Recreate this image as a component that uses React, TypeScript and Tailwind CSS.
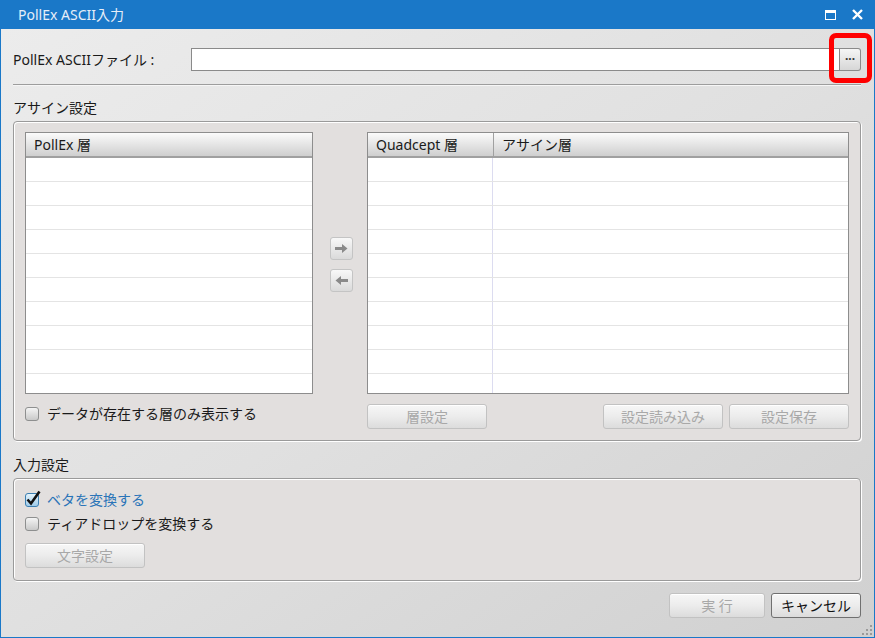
import React from "react";

const font = "font-['Noto_Sans','Noto_Sans_CJK_JP',sans-serif]";

function Checkbox({ checked, label }: { checked?: boolean; label: string }) {
  return (
    <div className="flex items-center h-[20px]">
      <div className="relative w-[14px] h-[14px] ml-[0px]">
        <div
          className={
            checked
              ? "w-[14px] h-[14px] rounded-[3px] border border-[#3c7fb1] bg-gradient-to-b from-[#e5f4fc] to-[#9fcbe9]"
              : "w-[14px] h-[14px] rounded-[3px] border border-[#8e8f8f] bg-gradient-to-b from-[#f4f4f4] to-[#c9c9c9]"
          }
        />
        {checked && (
          <svg className="absolute left-[1px] top-[-3px]" width="15" height="16" viewBox="0 0 15 16">
            <path d="M1.5 9.5 L5 13.5 L13.5 1.5" fill="none" stroke="#111" strokeWidth="2.6" strokeLinejoin="miter" />
          </svg>
        )}
      </div>
      <span className={"ml-[8px] text-[14px] leading-[20px] " + (checked ? "text-[#2a74b8]" : "text-[#1a1a1a]")}>{label}</span>
    </div>
  );
}

function Btn({ label, w, enabled, h = 25, className = "" }: { label: string; w: number; enabled?: boolean; h?: number; className?: string }) {
  return (
    <div
      style={{ width: w, height: h }}
      className={
        "flex items-center justify-center rounded-[3px] border text-[14px] leading-none bg-gradient-to-b from-[#f7f7f7] via-[#ececec] to-[#dcdcdc] shadow-[inset_0_1px_0_#ffffff] " +
        (enabled ? "border-[#707070] text-[#111] " : "border-[#c2c2c2] text-[#a8a8a8] ") +
        className
      }
    >
      {label}
    </div>
  );
}

function Row({ cols }: { cols?: boolean }) {
  return (
    <div className="flex h-[24px] border-b border-[#e4e4e4] bg-white shrink-0">
      {cols ? (
        <>
          <div className="w-[125px] h-full border-r border-[#dcdcf0]" />
          <div className="flex-1" />
        </>
      ) : null}
    </div>
  );
}

export default function App() {
  const rows = Array.from({ length: 10 });
  return (
    <div className={"w-[875px] h-[638px] bg-[#1a78c8] flex flex-col overflow-hidden text-[#1a1a1a] " + font}>
      {/* title bar */}
      <div className="h-[29px] flex items-center shrink-0 pl-[18px] pr-[12px]">
        <span className="text-[14px] text-[#e6eef8] leading-none">PollEx ASCII入力</span>
        <div className="ml-auto flex items-center gap-[16px]">
          <svg width="11" height="10" viewBox="0 0 11 10">
            <rect x="0.5" y="0.5" width="10" height="9" fill="none" stroke="#fff" strokeWidth="1" />
            <rect x="0" y="0" width="11" height="3" fill="#fff" />
          </svg>
          <svg width="11" height="11" viewBox="0 0 11 11">
            <path d="M1 1 L10 10 M10 1 L1 10" stroke="#fff" strokeWidth="2.4" />
          </svg>
        </div>
      </div>
      {/* body */}
      <div className="relative flex-1 mx-[1px] mb-[1px] bg-gradient-to-br from-[#ececec] via-[#e0e0e0] to-[#d0d0d0] pl-[12px] pr-[13px] flex flex-col">
        {/* file row */}
        <div className="flex items-center h-[23px] mt-[19px]">
          <div className="w-[178px] text-[14px] leading-none">PollEx ASCIIファイル :</div>
          <div className="flex-1 h-[23px] bg-white border border-[#8a8a8a]" />
          <div className="w-[21px] h-[23px] border border-l-0 border-[#8a8a8a] rounded-r-[3px] bg-gradient-to-b from-[#f6f6f6] to-[#d6d6d6] flex items-center justify-center text-[12px] font-bold leading-none text-[#333] pb-[1px]">
            ···
          </div>
        </div>
        <div className="mt-[13px] h-[1px] bg-[#9d9d9d] shadow-[0_1px_0_#f6f6f6]" />
        <div className="mt-[13px] text-[14px] leading-[20px]">アサイン設定</div>
        {/* group 1 */}
        <div className="mt-[3px] h-[320px] rounded-[4px] border border-[#9a9a9a] shadow-[inset_1px_1px_0_#ffffff,1px_1px_0_#ffffff] bg-[#e2dfde] px-[11px] pt-[10px] flex flex-col">
          <div className="flex h-[262px]">
            <div className="w-[288px] border border-[#8d8d8d] bg-white flex flex-col overflow-hidden">
              <div className="h-[25px] shrink-0 border-b-2 border-[#a0a0a0] bg-gradient-to-b from-[#fbfbfb] to-[#cfcfcf] flex items-center px-[8px] text-[14px] leading-none">PollEx 層</div>
              {rows.map((_, i) => (
                <Row key={i} />
              ))}
            </div>
            <div className="w-[54px] flex flex-col items-center justify-center gap-[9px] pl-[2px] pt-[3px]">
              {[0, 1].map((i) => (
                <div key={i} className="w-[23px] h-[23px] rounded-[3px] border border-[#c4c4c4] bg-gradient-to-b from-[#f8f8f8] to-[#dadada] flex items-center justify-center">
                  <svg width="13" height="9" viewBox="0 0 13 9" style={{ transform: i === 1 ? "scaleX(-1)" : undefined }}>
                    <path d="M0 3 H7 V0 L12.5 4.5 L7 9 V6 H0 Z" fill="#8a8a8a" />
                  </svg>
                </div>
              ))}
            </div>
            <div className="flex-1 border border-[#8d8d8d] bg-white flex flex-col overflow-hidden">
              <div className="h-[25px] shrink-0 border-b-2 border-[#a0a0a0] bg-gradient-to-b from-[#fbfbfb] to-[#cfcfcf] flex items-center text-[14px] leading-none">
                <div className="w-[126px] h-full border-r border-[#a0a0a0] flex items-center px-[8px]">Quadcept 層</div>
                <div className="px-[8px]">アサイン層</div>
              </div>
              {rows.map((_, i) => (
                <Row key={i} cols />
              ))}
            </div>
          </div>
          <div className="flex items-start mt-[10px] h-[25px]">
            <div className="w-[342px]">
              <Checkbox label="データが存在する層のみ表示する" />
            </div>
            <Btn label="層設定" w={120} />
            <Btn label="設定読み込み" w={120} className="ml-auto" />
            <Btn label="設定保存" w={120} className="ml-[6px]" />
          </div>
        </div>
        <div className="mt-[14px] text-[14px] leading-[20px]">入力設定</div>
        <div className="mt-[3px] h-[103px] rounded-[4px] border border-[#9a9a9a] shadow-[inset_1px_1px_0_#ffffff,1px_1px_0_#ffffff] bg-[#e2dfde] px-[11px] pt-[11px] flex flex-col">
          <Checkbox checked label="ベタを変換する" />
          <div className="mt-[4px]">
            <Checkbox label="ティアドロップを変換する" />
          </div>
          <div className="mt-[9px]">
            <Btn label="文字設定" w={120} />
          </div>
        </div>
        <div className="flex justify-end mt-[12px] gap-[6px]">
          <Btn label="実 行" w={96} />
          <Btn label="キャンセル" w={90} enabled />
        </div>
        {/* resize grip */}
        <svg className="absolute right-[2px] bottom-[2px]" width="10" height="10" viewBox="0 0 10 10">
          {[[8, 0], [4, 4], [8, 4], [0, 8], [4, 8], [8, 8]].map(([x, y], i) => (
            <rect key={i} x={x} y={y} width="2" height="2" fill="#9a9a9a" />
          ))}
        </svg>
        {/* red highlight */}
        <div className="absolute left-[828px] top-[4px] w-[43px] h-[50px] rounded-[7px] border-[5px] border-[#ff0000]" />
      </div>
    </div>
  );
}
